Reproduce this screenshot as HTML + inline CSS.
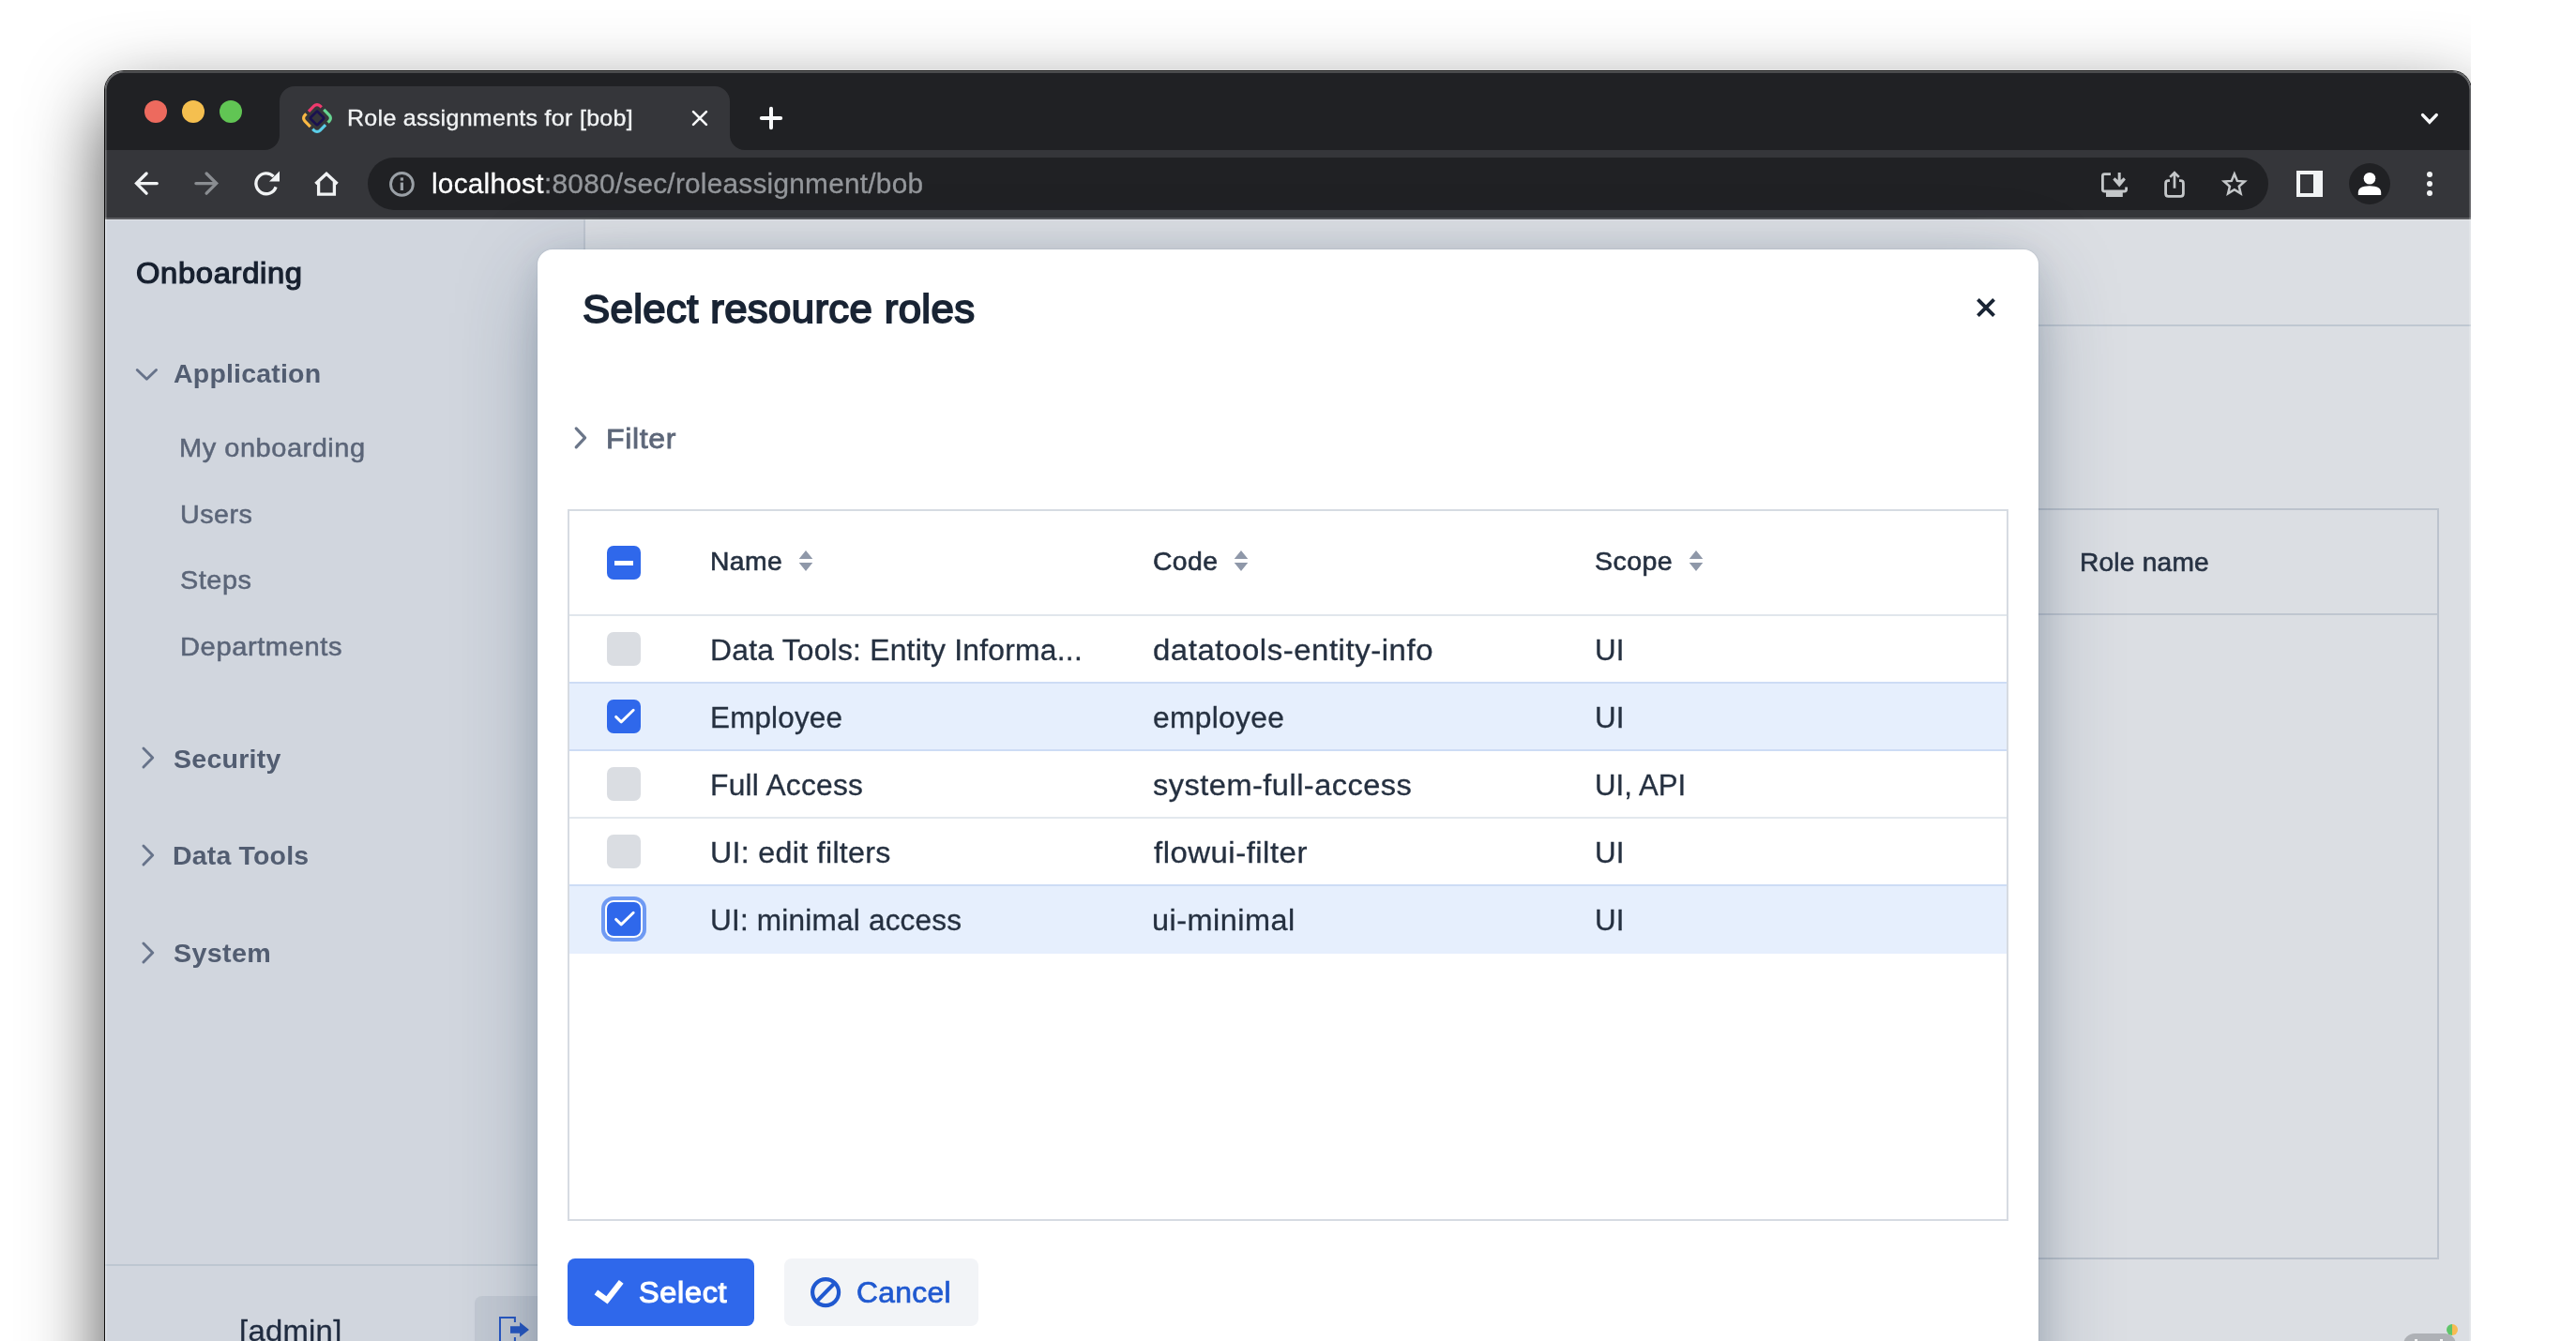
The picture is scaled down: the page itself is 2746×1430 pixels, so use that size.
<!DOCTYPE html>
<html><head><meta charset="utf-8"><title>Role assignments for [bob]</title>
<style>
html,body{margin:0;padding:0;background:#fff;width:2746px;height:1430px;overflow:hidden;}
body{font-family:"Liberation Sans",sans-serif;}
#stage{position:relative;width:2746px;height:1430px;overflow:hidden;background:#fff;}
.t{position:absolute;white-space:nowrap;}
#pg{will-change:transform;}
.a{position:absolute;}
#shadow{position:absolute;left:112px;top:76px;width:2522px;height:1500px;border-radius:20px;
 box-shadow:0 0 0 1px rgba(0,0,0,.92),0 33px 82px rgba(0,0,0,.7);}
#win{position:absolute;left:112px;top:76px;width:2522px;height:1500px;border-radius:20px;overflow:hidden;background:#dbdee3;}
#pg{position:absolute;left:-112px;top:-76px;width:2746px;height:1575px;}
#win:after{content:'';position:absolute;left:0;top:0;right:0;bottom:0;border-radius:20px;box-shadow:inset 0 0 0 1.6px rgba(255,255,255,.3);}
#cover{position:absolute;left:2634px;top:0;width:112px;height:1430px;background:#fff;}
</style></head><body><div id="stage">
<div id="shadow"></div>
<div id="win"><div id="pg">
<div class="a" style="left:112px;top:75px;width:2522px;height:85px;background:#202124;"></div><div class="a" style="left:112px;top:160px;width:2522px;height:73px;background:#35363a;"></div><div class="a" style="left:112px;top:231.6px;width:2522px;height:2.4px;background:#5c5d61;"></div><div class="a" style="left:112px;top:234px;width:2522px;height:1px;background:rgba(255,255,255,.28);z-index:1;"></div><div class="a" style="left:154px;top:107px;width:24px;height:24px;border-radius:50%;background:#ed6a5e;"></div><div class="a" style="left:194px;top:107px;width:24px;height:24px;border-radius:50%;background:#f5bf4f;"></div><div class="a" style="left:234px;top:107px;width:24px;height:24px;border-radius:50%;background:#61c554;"></div><svg class="a" style="left:270px;top:90px" width="540" height="72" viewBox="270 90 540 72">
<path d="M282 160 A16 16 0 0 0 298 144 L298 108 A16 16 0 0 1 314 92 L762 92 A16 16 0 0 1 778 108 L778 144 A16 16 0 0 0 794 160 Z" fill="#35363a"/>
</svg><svg class="a" style="left:318px;top:106px" width="40" height="40" viewBox="-20 -20 40 40">
<g transform="rotate(45)" fill="none" stroke-width="3.2">
<path d="M-11.5 1.3 L-11.5 -7 A4.5 4.5 0 0 1 -7 -11.5 L-4.8 -11.5" stroke="#ee3a6d"/>
<path d="M-11.5 1.3 L-11.5 -7 A4.5 4.5 0 0 1 -7 -11.5 L-4.8 -11.5" stroke="#66d491" transform="rotate(90)"/>
<path d="M-11.5 1.3 L-11.5 -7 A4.5 4.5 0 0 1 -7 -11.5 L-4.8 -11.5" stroke="#5bcde8" transform="rotate(180)"/>
<path d="M-11.5 1.3 L-11.5 -7 A4.5 4.5 0 0 1 -7 -11.5 L-4.8 -11.5" stroke="#fbb944" transform="rotate(270)"/>
<rect x="-5.35" y="-5.35" width="10.7" height="10.7" rx="1" stroke="#1a1150" stroke-width="2.7"/>
</g></svg><span class="t " style="left:370.38px;top:113.51px;font-size:24px;line-height:24px;letter-spacing:0.293px;color:#f1f3f4;transform-origin:0 0;transform:scaleX(1.0405);-webkit-text-stroke:0.35px #f1f3f4;">Role assignments for [bob]</span><svg class="a" style="left:730px;top:110px" width="32" height="32" viewBox="0 0 32 32"><path d="M9.03 9.05 L22.93 22.95 M22.93 9.05 L9.03 22.95" stroke="#f8f9fa" stroke-width="2.6" stroke-linecap="round" fill="none"/></svg><svg class="a" style="left:806px;top:110px" width="32" height="32" viewBox="0 0 32 32"><path d="M16 5.76 L16 26.16 M5.8 15.96 L26.2 15.96" stroke="#f8f9fa" stroke-width="4" stroke-linecap="round" fill="none"/></svg><svg class="a" style="left:2574px;top:110px" width="32" height="32" viewBox="0 0 32 32"><path d="M8.6 12.6 L15.9 20.3 L23.2 12.6" stroke="#f8f9fa" stroke-width="3.5" stroke-linecap="round" fill="none"/></svg><svg class="a" style="left:136px;top:176px" width="40" height="40" viewBox="0 0 40 40"><path d="M31.3 19.6 L9.5 19.6 M20.1 9 L9.5 19.6 L20.1 30.2" stroke="#f1f3f4" stroke-width="3.3" fill="none" stroke-linecap="round" stroke-linejoin="miter"/></svg><svg class="a" style="left:200px;top:176px" width="40" height="40" viewBox="0 0 40 40"><path d="M8.9 19.6 L30.7 19.6 M20.1 9 L30.7 19.6 L20.1 30.2" stroke="#8a8d91" stroke-width="3.3" fill="none" stroke-linecap="round" stroke-linejoin="miter"/></svg><svg class="a" style="left:264px;top:176px" width="40" height="40" viewBox="0 0 40 40">
<path d="M27.6 12.2 A10.9 10.9 0 1 0 30.1 23.4" stroke="#f1f3f4" stroke-width="3.3" fill="none"/>
<path d="M34 6.6 L34 17.6 L23 17.6 Z" fill="#f1f3f4"/></svg><svg class="a" style="left:328px;top:176px" width="40" height="40" viewBox="0 0 40 40">
<path d="M8.4 20 L20 9.2 L31.6 20 M11.6 17.4 L11.6 31.2 L28.4 31.2 L28.4 17.4" stroke="#f1f3f4" stroke-width="3.3" fill="none" stroke-linejoin="miter"/></svg><div class="a" style="left:392px;top:168px;width:2026px;height:56px;border-radius:28px;background:#202124;"></div><svg class="a" style="left:408px;top:176px" width="40" height="40" viewBox="0 0 40 40">
<circle cx="20.4" cy="20.4" r="11.9" stroke="#9aa0a6" stroke-width="2.9" fill="none"/>
<rect x="18.8" y="18.6" width="3.2" height="8.4" fill="#9aa0a6"/><rect x="18.8" y="13.4" width="3.2" height="3.2" fill="#9aa0a6"/></svg><span class="t " style="left:459.62px;top:181.80px;font-size:29px;line-height:29px;letter-spacing:0.240px;color:#ffffff;transform-origin:0 0;transform:scaleX(1.0262);-webkit-text-stroke:0.3px #ffffff;">localhost</span><span class="t " style="left:579.97px;top:181.80px;font-size:29px;line-height:29px;letter-spacing:0.245px;color:#94979b;transform-origin:0 0;transform:scaleX(1.0266);-webkit-text-stroke:0.3px #94979b;">:8080/sec/roleassignment/bob</span><svg class="a" style="left:2234px;top:176px" width="40" height="40" viewBox="0 0 40 40">
<path d="M16 9.6 L9.4 9.6 Q7.4 9.6 7.4 11.6 L7.4 26 Q7.4 28 9.4 28 L30.6 28 Q32.6 28 32.6 26 L32.6 23.5" stroke="#c4c7c9" stroke-width="2.8" fill="none"/>
<path d="M11 28.6 L28.8 28.6 L28.8 34 L11 34 Z" fill="#c4c7c9"/>
<path d="M23.7 8 L26.7 8 L26.7 16 L29.8 13.2 L31.9 15.4 L25.2 23.6 L18.3 15.4 L20.4 13.2 L23.7 16 Z" fill="#c4c7c9"/></svg><svg class="a" style="left:2298px;top:176px" width="40" height="40" viewBox="0 0 40 40">
<path d="M15 16.6 L13.4 16.6 Q10.6 16.6 10.6 19.4 L10.6 30.6 Q10.6 33.4 13.4 33.4 L26.6 33.4 Q29.4 33.4 29.4 30.6 L29.4 19.4 Q29.4 16.6 26.6 16.6 L25 16.6" stroke="#c4c7c9" stroke-width="2.8" fill="none"/>
<path d="M20 24.7 L20 8.4 M15.2 12.9 L20 8.1 L24.8 12.9" stroke="#c4c7c9" stroke-width="2.7" fill="none"/></svg><svg class="a" style="left:2362px;top:176px" width="40" height="40" viewBox="0 0 40 40">
<path d="M19.85 9.60 L22.91 16.89 L30.79 17.55 L24.80 22.71 L26.61 30.40 L19.85 26.30 L13.09 30.40 L14.90 22.71 L8.91 17.55 L16.79 16.89 Z" stroke="#c4c7c9" stroke-width="2.5" fill="none" stroke-linejoin="miter"/></svg><div class="a" style="left:2448px;top:182px;width:28px;height:28px;background:#f1f3f4;"></div><div class="a" style="left:2452px;top:186px;width:14.4px;height:20px;background:#35363a;"></div><svg class="a" style="left:2502px;top:172px" width="48" height="48" viewBox="0 0 48 48">
<circle cx="24" cy="24" r="22" fill="#202124"/>
<circle cx="24" cy="18.2" r="6.3" fill="#fff"/>
<path d="M11.8 36 L11.8 33.4 Q11.8 26.2 24 26.2 Q36.2 26.2 36.2 33.4 L36.2 36 Z" fill="#fff"/></svg><div class="a" style="left:2586.5px;top:182.8px;width:6.6px;height:6.6px;border-radius:50%;background:#f1f3f4;"></div><div class="a" style="left:2586.5px;top:192.7px;width:6.6px;height:6.6px;border-radius:50%;background:#f1f3f4;"></div><div class="a" style="left:2586.5px;top:202.8px;width:6.6px;height:6.6px;border-radius:50%;background:#f1f3f4;"></div><div class="a" style="left:112px;top:234px;width:510px;height:1300px;background:#d1d6de;"></div><div class="a" style="left:622px;top:234px;width:2px;height:1300px;background:#c1c7d1;"></div><div class="a" style="left:624px;top:346px;width:2010px;height:2px;background:#bfc7d1;"></div><div class="a" style="left:700px;top:542px;width:1896px;height:797px;border:2px solid #bcc3cd;"></div><div class="a" style="left:700px;top:654px;width:1898px;height:2px;background:#bfc6d0;"></div><span class="t " style="left:2217.46px;top:585.84px;font-size:27.6px;line-height:27.6px;letter-spacing:0.204px;color:#273243;transform-origin:0 0;transform:scaleX(1.0191);-webkit-text-stroke:0.6px #273243;">Role name</span><span class="t " style="left:144.76px;top:275.86px;font-size:31px;line-height:31px;letter-spacing:0.626px;color:#17202f;transform-origin:0 0;transform:scaleX(1.0558);-webkit-text-stroke:1.2px #17202f;">Onboarding</span><span class="t " style="left:184.69px;top:385.30px;font-size:28px;line-height:28px;letter-spacing:0.181px;color:#525d71;transform-origin:0 0;transform:scaleX(1.0185);font-weight:bold;">Application</span><span class="t " style="left:184.54px;top:795.60px;font-size:28px;line-height:28px;letter-spacing:0.214px;color:#525d71;transform-origin:0 0;transform:scaleX(1.0209);font-weight:bold;">Security</span><span class="t " style="left:183.55px;top:899.40px;font-size:28px;line-height:28px;letter-spacing:0.173px;color:#525d71;transform-origin:0 0;transform:scaleX(1.0172);font-weight:bold;">Data Tools</span><span class="t " style="left:184.54px;top:1003.30px;font-size:28px;line-height:28px;letter-spacing:0.323px;color:#525d71;transform-origin:0 0;transform:scaleX(1.0256);font-weight:bold;">System</span><span class="t " style="left:191.34px;top:463.99px;font-size:27.6px;line-height:27.6px;letter-spacing:0.488px;color:#5b6578;transform-origin:0 0;transform:scaleX(1.0515);-webkit-text-stroke:0.5px #5b6578;">My onboarding</span><span class="t " style="left:191.50px;top:535.29px;font-size:27.6px;line-height:27.6px;letter-spacing:0.461px;color:#5b6578;transform-origin:0 0;transform:scaleX(1.0414);-webkit-text-stroke:0.5px #5b6578;">Users</span><span class="t " style="left:192.06px;top:605.09px;font-size:27.6px;line-height:27.6px;letter-spacing:0.506px;color:#5b6578;transform-origin:0 0;transform:scaleX(1.0461);-webkit-text-stroke:0.5px #5b6578;">Steps</span><span class="t " style="left:191.63px;top:675.79px;font-size:27.6px;line-height:27.6px;letter-spacing:0.544px;color:#5b6578;transform-origin:0 0;transform:scaleX(1.0555);-webkit-text-stroke:0.5px #5b6578;">Departments</span><svg class="a" style="left:140px;top:384px" width="32" height="32" viewBox="0 0 32 32"><path d="M6.25 10.45 L16.4 20.3 L26.55 10.45" stroke="#67738a" stroke-width="2.9" stroke-linecap="round" stroke-linejoin="round" fill="none"/></svg><svg class="a" style="left:142px;top:791.7px" width="32" height="32" viewBox="0 0 32 32"><path d="M10.95 6.1 L20.75 16 L10.95 25.9" stroke="#67738a" stroke-width="2.9" stroke-linecap="round" stroke-linejoin="round" fill="none"/></svg><svg class="a" style="left:142px;top:895.7px" width="32" height="32" viewBox="0 0 32 32"><path d="M10.95 6.1 L20.75 16 L10.95 25.9" stroke="#67738a" stroke-width="2.9" stroke-linecap="round" stroke-linejoin="round" fill="none"/></svg><svg class="a" style="left:142px;top:999.6px" width="32" height="32" viewBox="0 0 32 32"><path d="M10.95 6.1 L20.75 16 L10.95 25.9" stroke="#67738a" stroke-width="2.9" stroke-linecap="round" stroke-linejoin="round" fill="none"/></svg><div class="a" style="left:112px;top:1347.5px;width:511px;height:2px;background:#bec7d1;"></div><span class="t " style="left:254.66px;top:1402.56px;font-size:32px;line-height:32px;letter-spacing:0.274px;color:#202c40;transform-origin:0 0;transform:scaleX(1.0251);-webkit-text-stroke:0.3px #202c40;">[admin]</span><div class="a" style="left:506px;top:1382px;width:90px;height:72px;border-radius:8px;background:#c3c9d3;"></div><svg class="a" style="left:530px;top:1402px" width="36" height="36" viewBox="0 0 36 36">
<path d="M18.9 8 L18.9 2.9 L3 2.9 L3 36 M18.9 24 L18.9 36" stroke="#2757c2" stroke-width="2" fill="none"/>
<path d="M14 12.2 L24.1 12.2 L24.1 8 L34 16 L24.1 23.8 L24.1 19.7 L14 19.7 Z" fill="#2757c2"/></svg><div class="a" style="left:2562px;top:1421.8px;width:56px;height:40px;border-radius:12px;background:#aeb1b6;"></div><div class="a" style="left:2574.2px;top:1427.6px;width:3px;height:6px;background:#f4f4f5;"></div><div class="a" style="left:2600.6px;top:1427.6px;width:3px;height:6px;background:#f4f4f5;"></div><div class="a" style="left:2607.8px;top:1411.8px;width:12.4px;height:12.4px;border-radius:50%;background:linear-gradient(90deg,#5fc56a 50%,#f7bb52 50%);"></div><div class="a" style="left:573px;top:266px;width:1600px;height:1300px;border-radius:16px;background:#fff;
box-shadow:0 0 0 1px rgba(28,55,90,.05),0 6px 36px -4px rgba(28,55,90,.16),0 24px 96px -12px rgba(28,52,79,.38);"></div><span class="t " style="left:621.26px;top:308.44px;font-size:42.6px;line-height:42.6px;letter-spacing:0.348px;color:#192434;transform-origin:0 0;transform:scaleX(1.0269);-webkit-text-stroke:1.8px #192434;">Select resource roles</span><svg class="a" style="left:2101px;top:312px" width="32" height="32" viewBox="0 0 32 32"><path d="M7.43 7.43 L24.57 24.57 M24.57 7.43 L7.43 24.57" stroke="#192434" stroke-width="3.9" fill="none"/></svg><svg class="a" style="left:603px;top:451px" width="32" height="32" viewBox="0 0 32 32"><path d="M11.2 5.9 L20.6 15.85 L11.2 25.8" stroke="#6b7689" stroke-width="3.2" stroke-linecap="round" stroke-linejoin="round" fill="none"/></svg><span class="t " style="left:645.67px;top:452.87px;font-size:29.8px;line-height:29.8px;letter-spacing:0.597px;color:#5d6779;transform-origin:0 0;transform:scaleX(1.0749);-webkit-text-stroke:0.8px #5d6779;">Filter</span><div class="a" style="left:605px;top:543px;width:1532px;height:755px;border:2px solid #d6dbe2;"></div><div class="a" style="left:607px;top:729px;width:1532px;height:70px;background:#e6effd;"></div><div class="a" style="left:607px;top:945px;width:1532px;height:71.5px;background:#e6effd;"></div><div class="a" style="left:607px;top:655px;width:1532px;height:2px;background:#e1e6ec;"></div><div class="a" style="left:607px;top:727px;width:1532px;height:2px;background:#cddcf5;"></div><div class="a" style="left:607px;top:799px;width:1532px;height:2px;background:#cddcf5;"></div><div class="a" style="left:607px;top:871px;width:1532px;height:2px;background:#e3e8ee;"></div><div class="a" style="left:607px;top:943px;width:1532px;height:2px;background:#cddcf5;"></div><span class="t " style="left:756.84px;top:584.94px;font-size:27.6px;line-height:27.6px;letter-spacing:0.397px;color:#253040;transform-origin:0 0;transform:scaleX(1.0259);-webkit-text-stroke:0.6px #253040;">Name</span><span class="t " style="left:1228.89px;top:584.94px;font-size:27.6px;line-height:27.6px;letter-spacing:0.379px;color:#253040;transform-origin:0 0;transform:scaleX(1.0273);-webkit-text-stroke:0.6px #253040;">Code</span><span class="t " style="left:1700.13px;top:584.94px;font-size:27.6px;line-height:27.6px;letter-spacing:0.425px;color:#253040;transform-origin:0 0;transform:scaleX(1.0345);-webkit-text-stroke:0.6px #253040;">Scope</span><svg class="a" style="left:849.3px;top:584px" width="20" height="30" viewBox="0 0 20 30"><path d="M2.7 12.1 L10 3 L17.3 12.1 Z M2.7 16 L10 25.1 L17.3 16 Z" fill="#8f98a9"/></svg><svg class="a" style="left:1313.4px;top:584px" width="20" height="30" viewBox="0 0 20 30"><path d="M2.7 12.1 L10 3 L17.3 12.1 Z M2.7 16 L10 25.1 L17.3 16 Z" fill="#8f98a9"/></svg><svg class="a" style="left:1798.2px;top:584px" width="20" height="30" viewBox="0 0 20 30"><path d="M2.7 12.1 L10 3 L17.3 12.1 Z M2.7 16 L10 25.1 L17.3 16 Z" fill="#8f98a9"/></svg><div class="a" style="left:647px;top:582px;width:36px;height:36px;border-radius:7px;background:#2f68eb;"></div><div class="a" style="left:655px;top:597.5px;width:20px;height:5px;background:#fff;"></div><div class="a" style="left:647px;top:674px;width:36px;height:36px;border-radius:7px;background:#dadde2;"></div><span class="t " style="left:757.01px;top:677.61px;font-size:31px;line-height:31px;letter-spacing:0.228px;color:#253040;transform-origin:0 0;transform:scaleX(1.0262);-webkit-text-stroke:0.3px #253040;">Data Tools: Entity Informa...</span><span class="t " style="left:1228.54px;top:677.61px;font-size:31px;line-height:31px;letter-spacing:0.524px;color:#253040;transform-origin:0 0;transform:scaleX(1.0622);-webkit-text-stroke:0.3px #253040;">datatools-entity-info</span><span class="t " style="left:1699.60px;top:677.61px;font-size:31px;line-height:31px;letter-spacing:0.186px;color:#253040;transform-origin:0 0;transform:scaleX(1.0108);-webkit-text-stroke:0.3px #253040;">UI</span><div class="a" style="left:647px;top:746px;width:36px;height:36px;border-radius:7px;background:#2f68eb;"></div><svg class="a" style="left:647px;top:746px" width="36" height="36" viewBox="0 0 36 36"><path d="M9.6 18.4 L15.2 23.9 L28.2 11.2" stroke="#fff" stroke-width="2.9" stroke-linecap="round" stroke-linejoin="round" fill="none"/></svg><span class="t " style="left:757.04px;top:749.61px;font-size:31px;line-height:31px;letter-spacing:0.171px;color:#253040;transform-origin:0 0;transform:scaleX(1.0135);-webkit-text-stroke:0.3px #253040;">Employee</span><span class="t " style="left:1228.58px;top:749.61px;font-size:31px;line-height:31px;letter-spacing:0.306px;color:#253040;transform-origin:0 0;transform:scaleX(1.0249);-webkit-text-stroke:0.3px #253040;">employee</span><span class="t " style="left:1699.60px;top:749.61px;font-size:31px;line-height:31px;letter-spacing:0.186px;color:#253040;transform-origin:0 0;transform:scaleX(1.0108);-webkit-text-stroke:0.3px #253040;">UI</span><div class="a" style="left:647px;top:818px;width:36px;height:36px;border-radius:7px;background:#dadde2;"></div><span class="t " style="left:757.01px;top:821.61px;font-size:31px;line-height:31px;letter-spacing:0.237px;color:#253040;transform-origin:0 0;transform:scaleX(1.0237);-webkit-text-stroke:0.3px #253040;">Full Access</span><span class="t " style="left:1229.04px;top:821.61px;font-size:31px;line-height:31px;letter-spacing:0.468px;color:#253040;transform-origin:0 0;transform:scaleX(1.0494);-webkit-text-stroke:0.3px #253040;">system-full-access</span><span class="t " style="left:1699.61px;top:821.61px;font-size:31px;line-height:31px;letter-spacing:0.047px;color:#253040;transform-origin:0 0;transform:scaleX(1.0046);-webkit-text-stroke:0.3px #253040;">UI, API</span><div class="a" style="left:647px;top:890px;width:36px;height:36px;border-radius:7px;background:#dadde2;"></div><span class="t " style="left:757.14px;top:893.61px;font-size:31px;line-height:31px;letter-spacing:0.293px;color:#253040;transform-origin:0 0;transform:scaleX(1.0386);-webkit-text-stroke:0.3px #253040;">UI: edit filters</span><span class="t " style="left:1229.53px;top:893.61px;font-size:31px;line-height:31px;letter-spacing:0.477px;color:#253040;transform-origin:0 0;transform:scaleX(1.0617);-webkit-text-stroke:0.3px #253040;">flowui-filter</span><span class="t " style="left:1699.60px;top:893.61px;font-size:31px;line-height:31px;letter-spacing:0.186px;color:#253040;transform-origin:0 0;transform:scaleX(1.0108);-webkit-text-stroke:0.3px #253040;">UI</span><div class="a" style="left:647px;top:962px;width:36px;height:36px;border-radius:7px;background:#2f68eb;box-shadow:0 0 0 2px #fff,0 0 0 6px #6f9af3;"></div><svg class="a" style="left:647px;top:962px" width="36" height="36" viewBox="0 0 36 36"><path d="M9.6 18.4 L15.2 23.9 L28.2 11.2" stroke="#fff" stroke-width="2.9" stroke-linecap="round" stroke-linejoin="round" fill="none"/></svg><span class="t " style="left:757.18px;top:965.61px;font-size:31px;line-height:31px;letter-spacing:0.183px;color:#253040;transform-origin:0 0;transform:scaleX(1.0185);-webkit-text-stroke:0.3px #253040;">UI: minimal access</span><span class="t " style="left:1227.75px;top:965.61px;font-size:31px;line-height:31px;letter-spacing:0.459px;color:#253040;transform-origin:0 0;transform:scaleX(1.0472);-webkit-text-stroke:0.3px #253040;">ui-minimal</span><span class="t " style="left:1699.60px;top:965.61px;font-size:31px;line-height:31px;letter-spacing:0.186px;color:#253040;transform-origin:0 0;transform:scaleX(1.0108);-webkit-text-stroke:0.3px #253040;">UI</span><div class="a" style="left:605px;top:1342px;width:199px;height:72px;border-radius:8px;background:#2f68eb;"></div><svg class="a" style="left:630px;top:1360px" width="40" height="36" viewBox="0 0 40 36"><path d="M5.4 18 L17 26.4 L32.2 6.9" stroke="#fff" stroke-width="6.1" fill="none"/></svg><span class="t " style="left:681.13px;top:1363.43px;font-size:30.5px;line-height:30.5px;letter-spacing:0.662px;color:#fff;transform-origin:0 0;transform:scaleX(1.0626);-webkit-text-stroke:1.1px #fff;">Select</span><div class="a" style="left:836px;top:1342px;width:207px;height:72px;border-radius:8px;background:#f2f4f7;"></div><svg class="a" style="left:860px;top:1358px" width="40" height="40" viewBox="0 0 40 40"><circle cx="20.1" cy="20.1" r="14" stroke="#2059d0" stroke-width="4.2" fill="none"/><path d="M10.5 29.9 L29.7 10.3" stroke="#2059d0" stroke-width="4.2"/></svg><span class="t " style="left:913.37px;top:1363.21px;font-size:31px;line-height:31px;letter-spacing:0.309px;color:#2059d0;transform-origin:0 0;transform:scaleX(1.0254);-webkit-text-stroke:0.7px #2059d0;">Cancel</span></div></div>
<div id="cover"></div>
</div></body></html>
